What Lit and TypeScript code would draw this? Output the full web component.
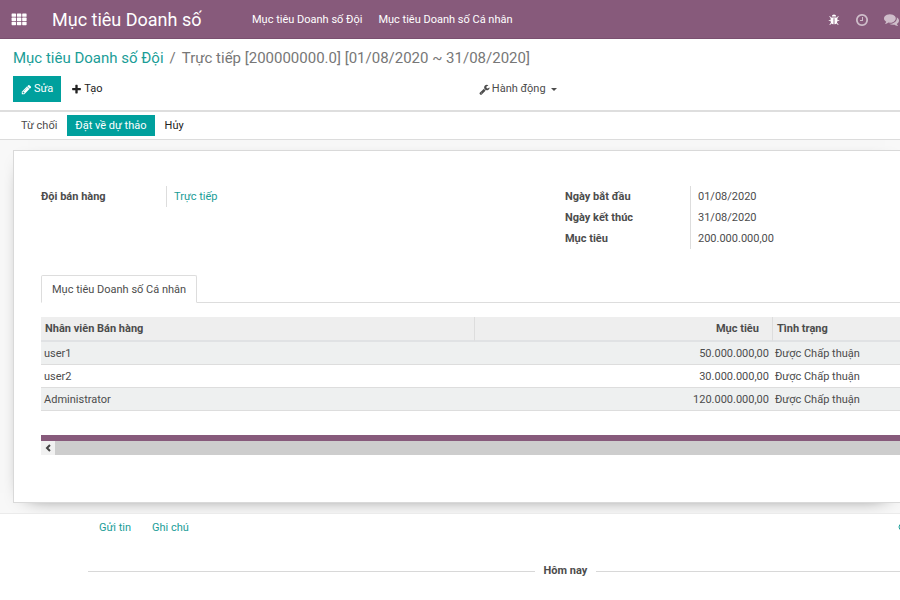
import { LitElement, html, css, svg } from "lit";
import { customElement, property } from "lit/decorators.js";

const ICONS: Record<string, string> = {
  pencil:
    "M491 1536l91-91-235-235-91 91v107h128v128h107zm523-928q0-22-22-22-10 0-17 7l-542 542q-7 7-7 17 0 22 22 22 10 0 17-7l542-542q7-7 7-17zm-54-192l416 416-832 832h-416v-416zm683 96q0 53-37 90l-166 166-416-416 166-165q36-38 90-38 53 0 91 38l235 234q37 39 37 91z",
  plus:
    "M1600 736v192q0 40-28 68t-68 28h-416v416q0 40-28 68t-68 28h-192q-40 0-68-28t-28-68v-416h-416q-40 0-68-28t-28-68v-192q0-40 28-68t68-28h416v-416q0-40 28-68t68-28h192q40 0 68 28t28 68v416h416q40 0 68 28t28 68z",
  wrench:
    "M448 1472q0-26-19-45t-45-19-45 19-19 45 19 45 45 19 45-19 19-45zm644-420l-682 682q-37 37-90 37-52 0-91-37l-106-108q-38-36-38-90 0-53 38-91l681-681q39 98 114.5 173.5t173.5 114.5zm634-435q0 39-23 106-47 134-164.5 217.5t-258.5 83.5q-185 0-316.5-131.5t-131.5-316.5 131.5-316.5 316.5-131.5q58 0 121.5 16.5t107.5 46.5q16 11 16 28t-16 28l-293 169v224l193 107q5-3 79-48.5t135.5-81 70.5-35.5q15 0 23.5 10t8.5 25z",
  bug:
    "M1696 960q0 26-19 45t-45 19h-224q0 171-67 290l208 209q19 19 19 45t-19 45q-18 19-45 19t-45-19l-198-197q-5 5-15 13t-42 28.5-65 36.5-82 29-97 13v-896h-128v896q-51 0-101.5-13.5t-87-33-66-39-43.5-32.5l-15-14-183 207q-20 21-48 21-24 0-43-16-19-18-20.5-44.5t15.5-46.5l202-227q-58-114-58-274h-224q-26 0-45-19t-19-45 19-45 45-19h224v-294l-173-173q-19-19-19-45t19-45 45-19 45 19l173 173h844l173-173q19-19 45-19t45 19 19 45-19 45l-173 173v294h224q26 0 45 19t19 45zm-480-576h-640q0-133 93.5-226.5t226.5-93.5 226.5 93.5 93.5 226.5z",
  clock:
    "M1024 544v448q0 14-9 23t-23 9h-320q-14 0-23-9t-9-23v-64q0-14 9-23t23-9h224v-352q0-14 9-23t23-9h64q14 0 23 9t9 23zm416 352q0-148-73-273t-198-198-273-73-273 73-198 198-73 273 73 273 198 198 273 73 273-73 198-198 73-273zm224 0q0 209-103 385.5t-279.5 279.5-385.5 103-385.5-103-279.5-279.5-103-385.5 103-385.5 279.5-279.5 385.5-103 385.5 103 279.5 279.5 103 385.5z",
  comments:
    "M1408 768q0 139-94 257t-256.5 186.5-353.5 68.5q-86 0-176-16-124 88-278 128-36 9-86 16h-3q-11 0-20.5-8t-11.5-21q-1-3-1-6.5t.5-6.5 2-6l2.5-5 3.500-5.500 4-5 4.500-5 4-4.500q5-6 23-25t26-29.5 22.5-29 25-38.5 20.5-44q-124-72-195-177t-71-224q0-139 94-257t256.5-186.5 353.5-68.5 353.5 68.5 256.5 186.5 94 257zm384 256q0 120-71 224.5t-195 176.5q10 24 20.5 44t25 38.5 22.5 29 26 29.5 23 25q1 1 4 4.5t4.5 5 4 5 3.5 5.5l2.500 5 2 6 .5 6.500-1 6.500q-3 14-13 22t-22 7q-50-7-86-16-154-40-278-128-90 16-176 16-271 0-472-132 58 4 88 4 161 0 309-45t264-129q125-92 192-212t67-254q0-77-23-152 129 71 204 178t75 230z",
};

@customElement("fa-icon")
class FaIcon extends LitElement {
  @property() name = "";

  static styles = css`
    :host {
      display: inline-flex;
      flex: none;
      width: 12px;
      height: 12px;
    }
    .glyph {
      width: 100%;
      height: 100%;
      fill: currentColor;
    }
  `;

  render() {
    return html`<svg class="glyph" viewBox="0 0 1792 1792" aria-hidden="true">
      <path d=${ICONS[this.name]}></path>
    </svg>`;
  }
}

const GROUPS = [
  [{ label: "Đội bán hàng", value: "Trực tiếp", link: true }],
  [
    { label: "Ngày bắt đầu", value: "01/08/2020", link: false },
    { label: "Ngày kết thúc", value: "31/08/2020", link: false },
    { label: "Mục tiêu", value: "200.000.000,00", link: false },
  ],
];

const ROWS = [
  { name: "user1", target: "50.000.000,00", state: "Được Chấp thuận" },
  { name: "user2", target: "30.000.000,00", state: "Được Chấp thuận" },
  { name: "Administrator", target: "120.000.000,00", state: "Được Chấp thuận" },
];

@customElement("app-root")
class AppRoot extends LitElement {
  static styles = css`
    :host {
      display: block;
      min-height: 100vh;
      overflow: hidden;
      background: #fff;
      color: #4c4c4c;
      font: 11px/20px Roboto, "Noto Sans", sans-serif;
    }
    * {
      box-sizing: border-box;
    }
    button {
      border: 0;
      padding: 0;
      background: none;
      color: inherit;
      font: inherit;
      cursor: pointer;
    }
    a {
      color: #1a9d97;
      text-decoration: none;
    }

    .navbar {
      display: flex;
      align-items: center;
      height: 39px;
      padding: 1px 1px 0 11px;
      background: #875a7b;
      border-bottom: 1px solid #7a4f6f;
      color: #fff;
    }
    .apps {
      display: flex;
    }
    .brand {
      width: 200px;
      margin-left: 25px;
      font-size: 18px;
      color: #fff;
    }
    .menu {
      display: flex;
      gap: 16px;
      flex: 1;
    }
    .menu a {
      color: #fff;
    }
    .systray {
      display: flex;
      align-items: center;
      gap: 15px;
    }
    .systray button {
      display: flex;
    }
    .muted {
      opacity: 0.6;
    }
    .medium {
      width: 14px;
      height: 14px;
    }
    .large {
      width: 15px;
      height: 15px;
    }

    .panel {
      padding: 9px 13px 8px;
      border-bottom: 2px solid #dedede;
    }
    .crumbs {
      display: flex;
      gap: 6px;
      margin: 0 0 8px;
      padding: 0;
      list-style: none;
      font-size: 15px;
      color: #777;
    }
    .actions {
      display: grid;
      grid-template-columns: 53.3% 1fr;
      align-items: center;
    }
    .main-actions {
      display: flex;
      align-items: center;
      gap: 10px;
    }
    .actions button {
      display: flex;
      align-items: center;
      gap: 2px;
    }
    .actions fa-icon {
      width: 11px;
      height: 11px;
    }
    .actions .primary {
      height: 26px;
      padding: 0 8px;
    }
    .primary {
      background: #00a09d;
      color: #fff;
    }
    .create {
      color: #222;
    }
    .caret {
      margin-left: 3px;
      border: 3px solid transparent;
      border-top-color: currentColor;
      border-bottom: 0;
    }

    .statusbar {
      display: flex;
      align-items: center;
      gap: 10px;
      height: 28px;
      padding-left: 21px;
      border-bottom: 1px solid #dcdcdc;
    }
    .statusbar .primary {
      height: 21px;
      padding: 0 8px;
    }
    .cancel {
      color: #222;
    }

    .backdrop {
      padding: 10px 0 10px 13px;
      background: #f8f8f8;
      border-bottom: 1px solid #ebebeb;
      overflow: hidden;
    }
    .sheet {
      padding: 35px 0 46px 27px;
      background: #fff;
      border: 1px solid #d9d9d9;
      border-right: 0;
      box-shadow: 0 5px 20px -15px #000;
    }
    .groups {
      display: grid;
      grid-template-columns: 61% 1fr;
      align-items: start;
      margin: 0 0 26px;
    }
    .group {
      margin: 0;
    }
    .field {
      display: grid;
      grid-template-columns: 125px 1fr;
      line-height: 21px;
    }
    .field dt {
      font-weight: 700;
    }
    .field dd {
      margin: 0;
      padding-left: 7px;
      border-left: 1px solid #ddd;
    }

    .tabs {
      display: flex;
      border-bottom: 1px solid #ddd;
      margin-bottom: 14px;
    }
    .tab {
      height: 28px;
      padding: 1px 10px 0;
      margin-bottom: -1px;
      border: 1px solid #ddd;
      border-bottom-color: #fff;
      border-radius: 2px 2px 0 0;
      background: #fff;
    }
    .lines {
      width: 100%;
      table-layout: fixed;
      border-collapse: separate;
      border-spacing: 0;
    }
    .lines th {
      height: 25px;
      padding: 0 4px;
      background: #eee;
      border-bottom: 2px solid #e0e2e4;
      text-align: left;
      font-weight: 700;
    }
    .lines th + th {
      border-left: 1px solid #ddd;
    }
    .lines td {
      height: 23px;
      padding: 2px 3px 0;
      border-bottom: 1px solid #ddd;
    }
    .lines tr:nth-child(odd) td {
      background: #eef0f0;
    }
    .lines .col-name {
      width: 50.4%;
    }
    .lines .col-target {
      width: 34.7%;
      padding-right: 13px;
    }
    .lines .number {
      text-align: right;
    }
    .table-foot {
      height: 6px;
      margin-top: 24px;
      background: #875a7b;
    }
    .scroller {
      display: flex;
      height: 14px;
      margin-bottom: 1px;
      background: #cdcdcd;
    }
    .scroller button {
      display: flex;
      align-items: center;
      justify-content: center;
      width: 14px;
      background: #f1f1f1;
    }

    .chatter {
      padding: 4px 0 20px 88px;
    }
    .topbar {
      display: flex;
      gap: 21px;
      padding-left: 11px;
      margin-bottom: 23px;
      color: #1a9d97;
    }
    .attach {
      width: 2px;
      margin-left: auto;
      overflow: hidden;
    }
    .separator {
      display: flex;
      align-items: center;
      gap: 9px;
      font-weight: 700;
    }
    .separator::before,
    .separator::after {
      content: "";
      flex: 1 1 0;
      height: 1px;
      background: #d8d8d8;
    }
    .separator::before {
      flex: 0 0 55%;
    }
  `;

  render() {
    return html`
      <header class="navbar">
        <button class="apps" aria-label="Apps">
          <svg width="16" height="13" viewBox="0 0 16 13" fill="#fff">
            ${[0, 1, 2].map((r) =>
              [0, 1, 2].map(
                (c) => svg`<rect x=${0.6 + c * 5.3} y=${0.4 + r * 4.2} width="4.4" height="3.4" rx="0.6"></rect>`
              )
            )}
          </svg>
        </button>
        <a class="brand" href="#">Mục tiêu Doanh số</a>
        <nav class="menu">
          <a href="#">Mục tiêu Doanh số Đội</a>
          <a href="#">Mục tiêu Doanh số Cá nhân</a>
        </nav>
        <div class="systray">
          <button aria-label="Debug"><fa-icon name="bug"></fa-icon></button>
          <button class="muted" aria-label="Activities"><fa-icon class="medium" name="clock"></fa-icon></button>
          <button class="muted" aria-label="Messages"><fa-icon class="large" name="comments"></fa-icon></button>
        </div>
      </header>

      <section class="panel">
        <ol class="crumbs">
          <li><a href="#">Mục tiêu Doanh số Đội</a></li>
          <li>/</li>
          <li>Trực tiếp [200000000.0] [01/08/2020 ~ 31/08/2020]</li>
        </ol>
        <div class="actions">
          <div class="main-actions">
            <button class="primary"><fa-icon name="pencil"></fa-icon>Sửa</button>
            <button class="create"><fa-icon name="plus"></fa-icon>Tạo</button>
          </div>
          <button><fa-icon name="wrench"></fa-icon>Hành động<span class="caret"></span></button>
        </div>
      </section>

      <main>
        <div class="statusbar">
          <button>Từ chối</button>
          <button class="primary">Đặt về dự thảo</button>
          <button class="cancel">Hủy</button>
        </div>
        <div class="backdrop">
          <article class="sheet">
            <div class="groups">
              ${GROUPS.map(
                (group) => html`<dl class="group">
                  ${group.map(
                    (f) => html`<div class="field">
                      <dt>${f.label}</dt>
                      <dd>${f.link ? html`<a href="#">${f.value}</a>` : f.value}</dd>
                    </div>`
                  )}
                </dl>`
              )}
            </div>
            <div class="tabs" role="tablist">
              <button class="tab" role="tab" aria-selected="true">Mục tiêu Doanh số Cá nhân</button>
            </div>
            <table class="lines">
              <thead>
                <tr>
                  <th class="col-name">Nhân viên Bán hàng</th>
                  <th class="col-target number">Mục tiêu</th>
                  <th>Tình trạng</th>
                </tr>
              </thead>
              <tbody>
                ${ROWS.map(
                  (r) => html`<tr>
                    <td>${r.name}</td>
                    <td class="number">${r.target}</td>
                    <td>${r.state}</td>
                  </tr>`
                )}
              </tbody>
            </table>
            <div class="table-foot"></div>
            <div class="scroller">
              <button aria-label="Scroll left">
                <svg width="6" height="8" viewBox="0 0 6 8" fill="none" stroke="#444" stroke-width="2">
                  <path d="M5 1L2 4l3 3"></path>
                </svg>
              </button>
            </div>
          </article>
        </div>
      </main>

      <section class="chatter">
        <div class="topbar">
          <button>Gửi tin</button>
          <button>Ghi chú</button>
          <button class="attach" aria-label="Attachments">
            <svg width="8" height="8" viewBox="0 0 8 8" fill="none" stroke="currentColor">
              <circle cx="4" cy="4" r="3"></circle>
            </svg>
          </button>
        </div>
        <div class="separator">Hôm nay</div>
      </section>
    `;
  }
}
